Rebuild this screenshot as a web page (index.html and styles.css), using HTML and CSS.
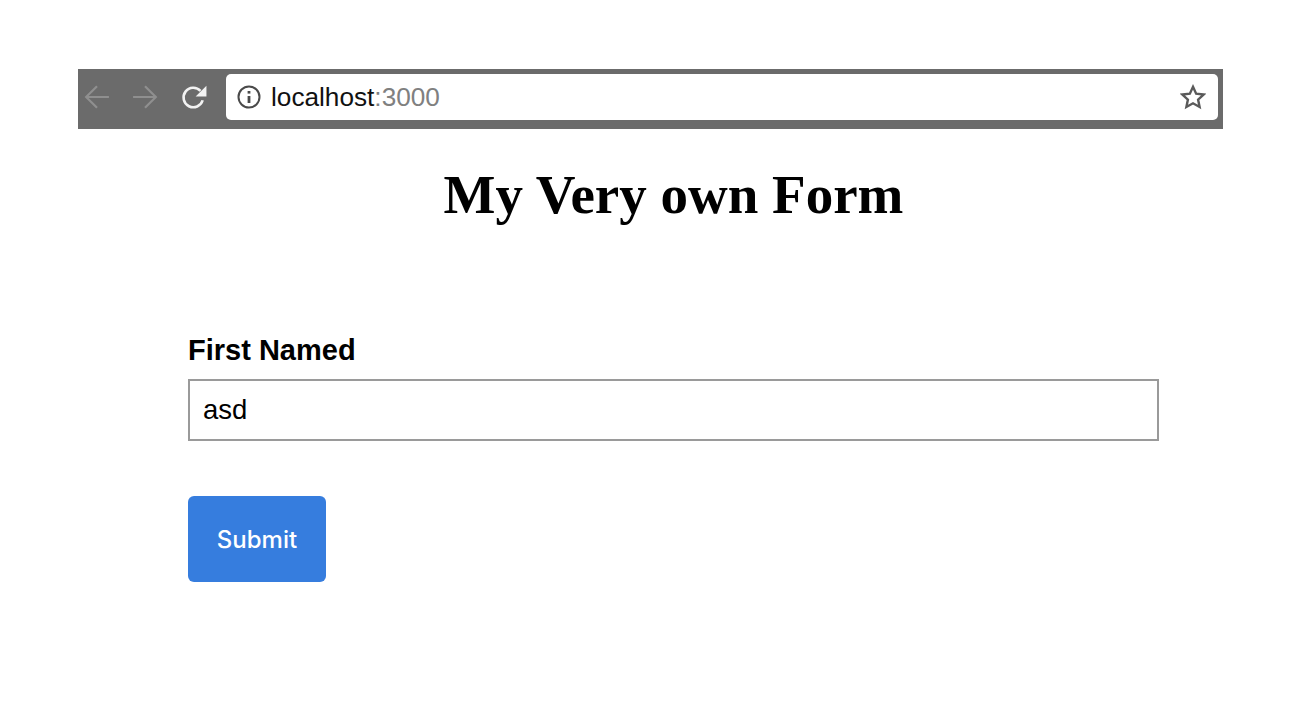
FILE: index.html
```html
<!DOCTYPE html>
<html lang="en">

<head>
    <meta charset="UTF-8">
    <title>My Very own Form</title>
    <link rel="stylesheet" href="styles.css">
</head>

<body>
    <div class="page">
        <div class="toolbar">
            <svg class="nav_icon dim" viewBox="0 0 24 24"><path d="M23 12H2M12 2L2 12l10 10"/></svg>
            <svg class="nav_icon dim fwd" viewBox="0 0 24 24"><path d="M1 12h21M12 2l10 10-10 10"/></svg>
            <svg class="nav_icon reload" viewBox="0 0 24 24"><path d="M20 15a9 9 0 1 1-2-8.6"/><path class="fill" d="M23.5 1.5v10h-10z"/></svg>
            <div class="urlbar">
                <svg class="info" viewBox="0 0 24 24"><circle cx="12" cy="12" r="10.5"/><path class="thick" d="M12 11v7"/><path class="thick" d="M12 6v2.6"/></svg>
                <span class="host">localhost<span class="port">:3000</span></span>
                <svg class="star" viewBox="0 0 24 24"><path d="M12 2.6l2.9 6.3 6.9.8-5.1 4.7 1.4 6.8-6.1-3.4-6.1 3.4 1.4-6.8-5.1-4.7 6.9-.8z"/></svg>
            </div>
        </div>

        <h1>My Very own Form</h1>

        <form class="my_form">
            <label class="lbl" for="first">First Named</label>
            <input type="text" id="first" class="txt" value="asd">
            <button type="button" class="sub_btn">Submit</button>
        </form>
    </div>
</body>

</html>
```
FILE: styles.css
```css
body {
    margin: 0;
    background-color: white;
    color: black;
}

.page {
    box-sizing: border-box;
    width: 1300px;
    height: 715px;
    padding: 69px 77px 0 78px;
}

.toolbar {
    box-sizing: border-box;
    display: flex;
    align-items: flex-start;
    height: 60px;
    padding: 5px 5px 0 6px;
    background-color: #6b6b6b;
}

.nav_icon {
    flex: none;
    width: 26px;
    height: 26px;
    margin-top: 10px;
    margin-right: 22px;
    fill: none;
    stroke: #8f8f8f;
    stroke-width: 2;
}

.fwd {
    margin-right: 23px;
}

.reload {
    margin-right: 19px;
    stroke: #f2f2f2;
    stroke-width: 2.4;
}

.reload .fill {
    fill: #f2f2f2;
    stroke: none;
}

.urlbar {
    box-sizing: border-box;
    flex: 1;
    display: flex;
    align-items: center;
    height: 46px;
    padding: 0 12px 0 11px;
    border-radius: 5px;
    background-color: white;
    font-family: "Liberation Sans", Arial, sans-serif;
    font-size: 26.2px;
}

.info {
    width: 24px;
    height: 24px;
    margin-right: 10px;
    fill: none;
    stroke: #4a4a4a;
    stroke-width: 2;
}

.info .thick {
    stroke-width: 2.8;
}

.host {
    flex: 1;
    color: #111;
}

.port {
    color: #808080;
}

.star {
    width: 26px;
    height: 26px;
    fill: none;
    stroke: #5a5a5a;
    stroke-width: 2.2;
}

h1 {
    margin: 33px 0 0;
    padding-left: 46px;
    text-align: center;
    font-family: "Liberation Serif", "Times New Roman", serif;
    font-size: 55px;
    line-height: 66px;
    font-weight: bold;
}

.my_form {
    display: flex;
    flex-direction: column;
    align-items: flex-start;
    margin: 105px 0 0 110px;
    font-family: "Liberation Sans", Arial, sans-serif;
}

.lbl {
    font-size: 29px;
    line-height: 34px;
    font-weight: bold;
}

.txt {
    box-sizing: border-box;
    width: 971px;
    height: 62px;
    margin-top: 12px;
    padding: 0 13px;
    border: #9a9a9a solid 2px;
    font-family: inherit;
    font-size: 27.5px;
    color: black;
}

.sub_btn {
    box-sizing: border-box;
    width: 138px;
    height: 86px;
    margin-top: 55px;
    border: none;
    border-radius: 6px;
    background-color: #367dde;
    color: white;
    font-family: Inter, sans-serif;
    font-size: 24px;
    font-weight: 500;
}
```
